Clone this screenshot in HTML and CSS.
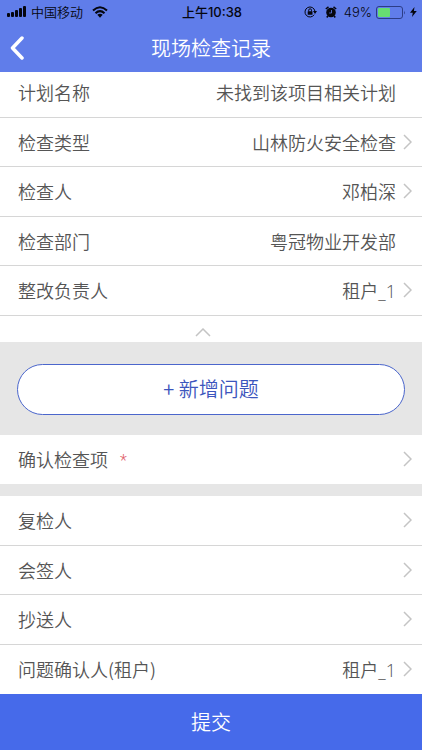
FILE: index.html
```html
<!DOCTYPE html>
<html lang="zh-CN">
<head>
<meta charset="utf-8">
<meta name="viewport" content="width=device-width, initial-scale=1">
<title>现场检查记录</title>
<link rel="stylesheet" href="styles.css">
</head>
<body>
<header class="top">
  <div class="status">
    <div class="status-side">
      <svg class="signal" width="19" height="12" viewBox="0 0 19 12" aria-hidden="true"><rect x="0" y="7" width="3" height="4" rx="1"/><rect x="4" y="6" width="3" height="5" rx="1"/><rect x="8" y="4" width="3" height="7" rx="1"/><rect x="12" y="2" width="3" height="9" rx="1"/><rect x="16" y="0" width="3" height="11" rx="1"/></svg>
      <span class="carrier">中国移动</span>
      <svg class="wifi" width="16" height="12" viewBox="0 0 16 12" aria-hidden="true"><g fill="none" stroke="#05060f" stroke-width="2"><path d="M1 4.500Q8-2 15 4.500"/><path d="M3.500 7.300Q8 3 12.500 7.300"/></g><path d="M5.300 8.800Q8 6.600 10.700 8.800L8 11.700z"/></svg>
    </div>
    <span class="time">上午10:38</span>
    <div class="status-side status-end">
      <svg width="13" height="12" viewBox="0 0 13 12" aria-hidden="true"><path d="M10.200 8.700A5 5 0 1 1 10.900 5" fill="none" stroke="#05060f"/><path d="M9 5h4l-2 3z"/><rect x="3.700" y="5.300" width="4.800" height="3.500" rx=".5"/><path d="M4.700 5.500V4.200a1.400 1.400 0 0 1 2.800 0v1.300" fill="none" stroke="#05060f"/></svg>
      <svg class="alarm" width="12" height="12" viewBox="0 0 12 12" aria-hidden="true"><circle cx="6" cy="6.500" r="4.800"/><path d="M.8 3L3.500 .8M11.200 3L8.500 .8M2.800 10l-1 1.500M9.200 10l1 1.500" stroke="#05060f" stroke-width="1.500"/><path d="M6.500 4v3H4.200" fill="none" stroke="#607dea" stroke-width=".8"/></svg>
      <span class="percent">49%</span>
      <svg class="battery" width="30" height="13" viewBox="0 0 30 13" aria-hidden="true"><rect x=".5" y=".5" width="26" height="12" rx="2.500" fill="none" stroke="#2c3d86"/><rect x="2" y="2" width="12" height="9" rx="1" fill="#67dc72"/><path d="M28 4.500q1.500 2 0 4z" fill="#2c3d86"/></svg>
      <svg class="bolt" width="7" height="10" viewBox="0 0 7 10" aria-hidden="true"><path d="M4.500 0L0 5.700h2.800L2 10l4.800-5.900H3.900z"/></svg>
    </div>
  </div>
  <div class="nav">
    <button class="back" type="button" aria-label="返回"><svg width="14" height="24" viewBox="0 0 14 24" aria-hidden="true"><path d="M12 2L2.500 12 12 22" fill="none" stroke="#fff" stroke-width="3.500" stroke-linecap="round" stroke-linejoin="round"/></svg></button>
    <h1>现场检查记录</h1>
  </div>
</header>
<main>
  <section class="list list-plan">
    <div class="row"><span>计划名称</span><span class="value">未找到该项目相关计划</span></div>
    <a class="row" href="#type"><span>检查类型</span><span class="value">山林防火安全检查</span><svg class="arrow" viewBox="0 0 9 16" aria-hidden="true"><path d="M1 1l7 7-7 7"/></svg></a>
    <a class="row" href="#inspector"><span>检查人</span><span class="value">邓柏深</span><svg class="arrow" viewBox="0 0 9 16" aria-hidden="true"><path d="M1 1l7 7-7 7"/></svg></a>
    <div class="row"><span>检查部门</span><span class="value">粤冠物业开发部</span></div>
    <a class="row" href="#owner"><span>整改负责人</span><span class="value">租户<span class="latin">_1</span></span><svg class="arrow" viewBox="0 0 9 16" aria-hidden="true"><path d="M1 1l7 7-7 7"/></svg></a>
  </section>
  <button class="collapse" type="button" aria-label="收起"><svg width="16" height="9" viewBox="0 0 16 9" aria-hidden="true"><path d="M1 8l7-7 7 7"/></svg></button>
  <div class="add-band"><button class="add" type="button">+ 新增问题</button></div>
  <section class="list list-confirm">
    <a class="row" href="#items"><span>确认检查项</span><span class="required">*</span><span class="value"></span><svg class="arrow" viewBox="0 0 9 16" aria-hidden="true"><path d="M1 1l7 7-7 7"/></svg></a>
  </section>
  <section class="list list-people">
    <a class="row" href="#review"><span>复检人</span><span class="value"></span><svg class="arrow" viewBox="0 0 9 16" aria-hidden="true"><path d="M1 1l7 7-7 7"/></svg></a>
    <a class="row" href="#sign"><span>会签人</span><span class="value"></span><svg class="arrow" viewBox="0 0 9 16" aria-hidden="true"><path d="M1 1l7 7-7 7"/></svg></a>
    <a class="row" href="#copy"><span>抄送人</span><span class="value"></span><svg class="arrow" viewBox="0 0 9 16" aria-hidden="true"><path d="M1 1l7 7-7 7"/></svg></a>
    <a class="row" href="#tenant"><span>问题确认人(租户)</span><span class="value">租户<span class="latin">_1</span></span><svg class="arrow" viewBox="0 0 9 16" aria-hidden="true"><path d="M1 1l7 7-7 7"/></svg></a>
  </section>
</main>
<button class="submit" type="button">提交</button>
</body>
</html>
```
FILE: styles.css
```css
* {
  box-sizing: border-box;
}

body {
  margin: 0;
  min-height: 100vh;
  display: flex;
  flex-direction: column;
  background: #e6e6e6;
  color: #555;
  font: 350 18px/24px "Noto Sans CJK SC", sans-serif;
}

button {
  margin: 0;
  padding: 0;
  border: 0;
  background: none;
  font: inherit;
}

svg {
  display: block;
  flex: none;
}

.top {
  position: sticky;
  top: 0;
  z-index: 1;
  background: #607dea;
}

.status {
  display: flex;
  align-items: center;
  height: 24px;
  padding: 0 5px 0 7px;
  color: #05060f;
  fill: #05060f;
  font-size: 13px;
}

.status-side {
  flex: 1;
  display: flex;
  align-items: center;
}

.carrier {
  margin: 0 9px 0 5px;
}

.time {
  font-family: Inter, "Noto Sans CJK SC", sans-serif;
  font-weight: 500;
}

.status-end {
  justify-content: flex-end;
}

.alarm {
  margin: 0 7px 0 8px;
}

.percent {
  font-family: Inter, sans-serif;
}

.battery {
  margin: 0 4px;
}

.nav {
  display: grid;
  grid-template-columns: 40px 1fr 40px;
  align-items: center;
  height: 48px;
}

.back {
  height: 48px;
  padding-left: 10px;
}

h1 {
  margin: 0;
  color: #fff;
  font-size: 20px;
  font-weight: 350;
  text-align: center;
}

main {
  flex: 1;
  display: flex;
  flex-direction: column;
}

.list {
  display: flex;
  flex-direction: column;
  background: #fff;
}

.list-plan {
  flex: 5 0 auto;
  margin-top: -4px;
}

.list-confirm {
  flex: 1 0 auto;
  margin-bottom: 12px;
}

.list-people {
  flex: 4 0 auto;
}

.row {
  flex: 1 0 49px;
  display: flex;
  align-items: center;
  padding: 0 26px 0 18px;
  border-bottom: 1px solid #d6d6d6;
  color: inherit;
  text-decoration: none;
}

.list-confirm .row,
.list-people .row:last-child {
  border-bottom: 0;
}

a.row {
  padding-right: 10px;
}

.value {
  flex: 1;
  text-align: right;
}

.latin {
  font-family: "Open Sans", sans-serif;
}

.arrow {
  width: 9px;
  height: 16px;
  margin-left: 7px;
}

.arrow path,
.collapse path {
  fill: none;
  stroke: #c4c4c4;
  stroke-width: 1.5;
}

.required {
  margin-left: 12px;
  padding-top: 4px;
  color: #e0606a;
  font-family: Roboto, sans-serif;
  font-size: 16px;
}

.collapse {
  display: flex;
  align-items: center;
  justify-content: center;
  height: 26px;
  padding: 8px 16px 0 0;
  background: #fff;
}

.add-band {
  padding: 22px 17px 20px;
}

.add {
  display: block;
  width: 100%;
  height: 51px;
  border: 1px solid #4b66cc;
  border-radius: 26px;
  background: #fff;
  color: #3c55bd;
  font-size: 20px;
}

.submit {
  height: 56px;
  background: #466aea;
  color: #fff;
  font-size: 20px;
}
```
